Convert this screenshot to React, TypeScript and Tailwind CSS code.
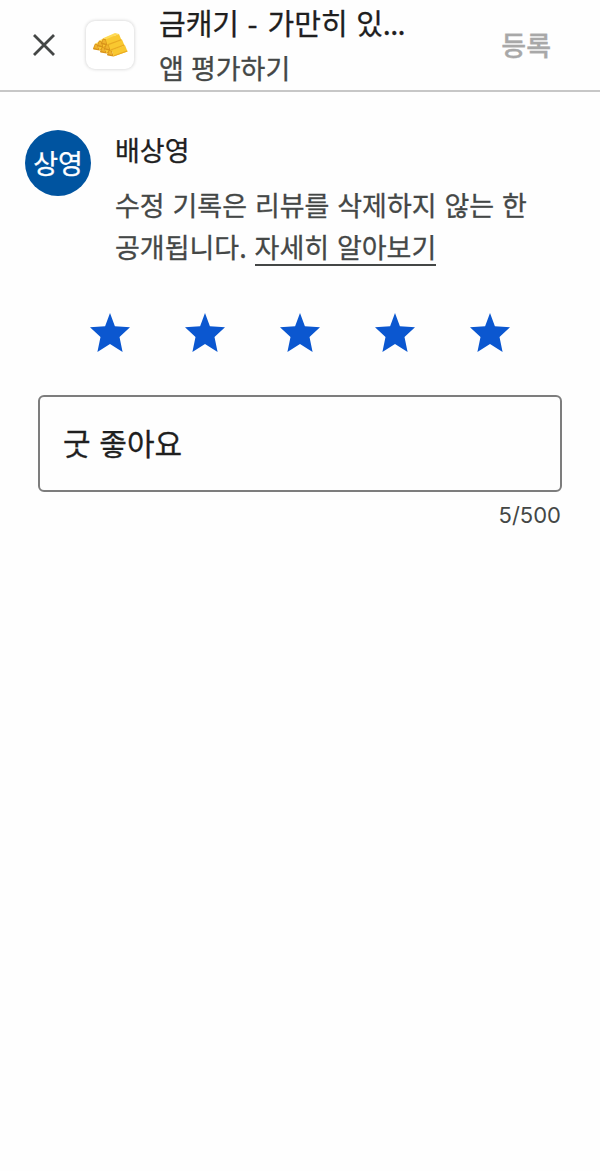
import React, { useState } from 'react';

const MAX_LENGTH = 500;

const CloseIcon = () => (
  <svg viewBox="0 0 22 22" className="w-[22px] h-[22px]" fill="none" stroke="#444746" strokeWidth="2.8">
    <path d="M1 1L21 21M21 1L1 21" />
  </svg>
);

const StarIcon = () => (
  <svg viewBox="0 0 40 39" className="w-10 h-[39px]" fill="#0b57d0">
    <path d="M20 0L24.9 13.2L40 14.2L29.5 24L32.6 39L20 31L7.4 39L10.5 24L0 14.2L15.1 13.2Z" />
  </svg>
);

interface BarProps {
  x: number;
  y: number;
}

// One gold bar: darker end face on the left, lit top and a long side
const GoldBar: React.FC<BarProps> = ({ x, y }) => (
  <g transform={`translate(${x} ${y})`}>
    <path d="M0 5.4L2 0.5L5 1.5L6.5 7.6L0.5 6.4Z" fill="#d9941a" />
    <path d="M1.2 5L2.4 1.6L4.4 2.4L5.2 6Z" fill="#f0b32c" />
    <path d="M2 0.5L14 -4.8L18 -3.8L5 1.5Z" fill="#ffdb55" />
    <path d="M5 1.5L18 -3.8L20.5 2.4L6.5 7.6Z" fill="#f9c830" />
    <path d="M6.5 7.6L20.5 2.4L20.1 1.4L6.2 6.4Z" fill="#e9aa22" />
  </g>
);

const AppIcon = () => (
  <div className="w-12 h-12 rounded-[9px] bg-white shadow-[0_0_3px_1px_rgba(0,0,0,0.12)] flex items-center justify-center shrink-0">
    <svg viewBox="0 0 35 24" className="w-[35px] h-6">
      <GoldBar x={0} y={10} />
      <GoldBar x={7} y={13} />
      <GoldBar x={14} y={16} />
      <GoldBar x={4} y={7} />
      <GoldBar x={11} y={10.2} />
      <GoldBar x={8} y={4.8} />
    </svg>
  </div>
);

const App: React.FC = () => {
  const [review, setReview] = useState('굿 좋아요');
  const [rating, setRating] = useState(5);

  return (
    <div className="w-[600px] h-[1171px] bg-[#fefefe] text-[#1f1f1f] font-['Noto_Sans_CJK_KR',sans-serif] [-webkit-text-stroke:0.3px]">
      {/* Header */}
      <header className="h-[92px] border-b-2 border-[#c7c7c7] flex items-center pl-[33px] pr-[49px]">
        <button className="shrink-0" aria-label="닫기">
          <CloseIcon />
        </button>
        <div className="ml-[31px]">
          <AppIcon />
        </div>
        <div className="ml-[25px] flex-1 whitespace-nowrap">
          <h1 className="text-[29px] leading-[45px] [word-spacing:2px]">
            금캐기 <span className="tracking-[1.5px]">-</span> 가만히 있<span className="tracking-[-0.7px]">...</span>
          </h1>
          <p className="text-[27px] leading-[45px] text-[#444746] [word-spacing:1px]">앱 평가하기</p>
        </div>
        <button className="text-[27px] leading-10 font-medium text-[#a8a8a8]">등록</button>
      </header>

      {/* Reviewer */}
      <section className="flex pl-[25px] pt-[38px]">
        <div className="w-[66px] h-[66px] rounded-full bg-[#0054a0] text-white text-[27px] flex items-center justify-center shrink-0">
          상영
        </div>
        <div className="ml-6 whitespace-nowrap">
          <h2 className="text-[27px] leading-10">배상영</h2>
          <p className="mt-[14px] text-[27px] leading-[42px] text-[#444746] [word-spacing:1.8px]">
            수정 기록은 리뷰를 삭제하지 않는 한
            <br />
            공개됩니다. <a className="inline-block leading-[34px] border-b-2 border-[#444746]">자세히 알아보기</a>
          </p>
        </div>
      </section>

      {/* Rating */}
      <div className="mt-[45px] pl-[89.5px] pr-[90.5px] flex justify-between">
        {[1, 2, 3, 4, 5].map((n) => (
          <button key={n} onClick={() => setRating(n)} className={n <= rating ? 'opacity-100' : 'opacity-30'}>
            <StarIcon />
          </button>
        ))}
      </div>

      {/* Review text */}
      <div className="mt-[43px] mx-[38px]">
        <input
          value={review}
          maxLength={MAX_LENGTH}
          onChange={(e) => setReview(e.target.value)}
          className="block w-full h-[97px] px-[23px] pb-[3px] rounded-md border-2 border-[#7d7d7d] outline-none text-[30px] [word-spacing:2px]"
        />
        <div className="mt-2 pr-px text-right text-[22px] leading-[30px] text-[#444746] font-['Inter',sans-serif] [-webkit-text-stroke:0]">
          {review.length}/{MAX_LENGTH}
        </div>
      </div>
    </div>
  );
};

export default App;
